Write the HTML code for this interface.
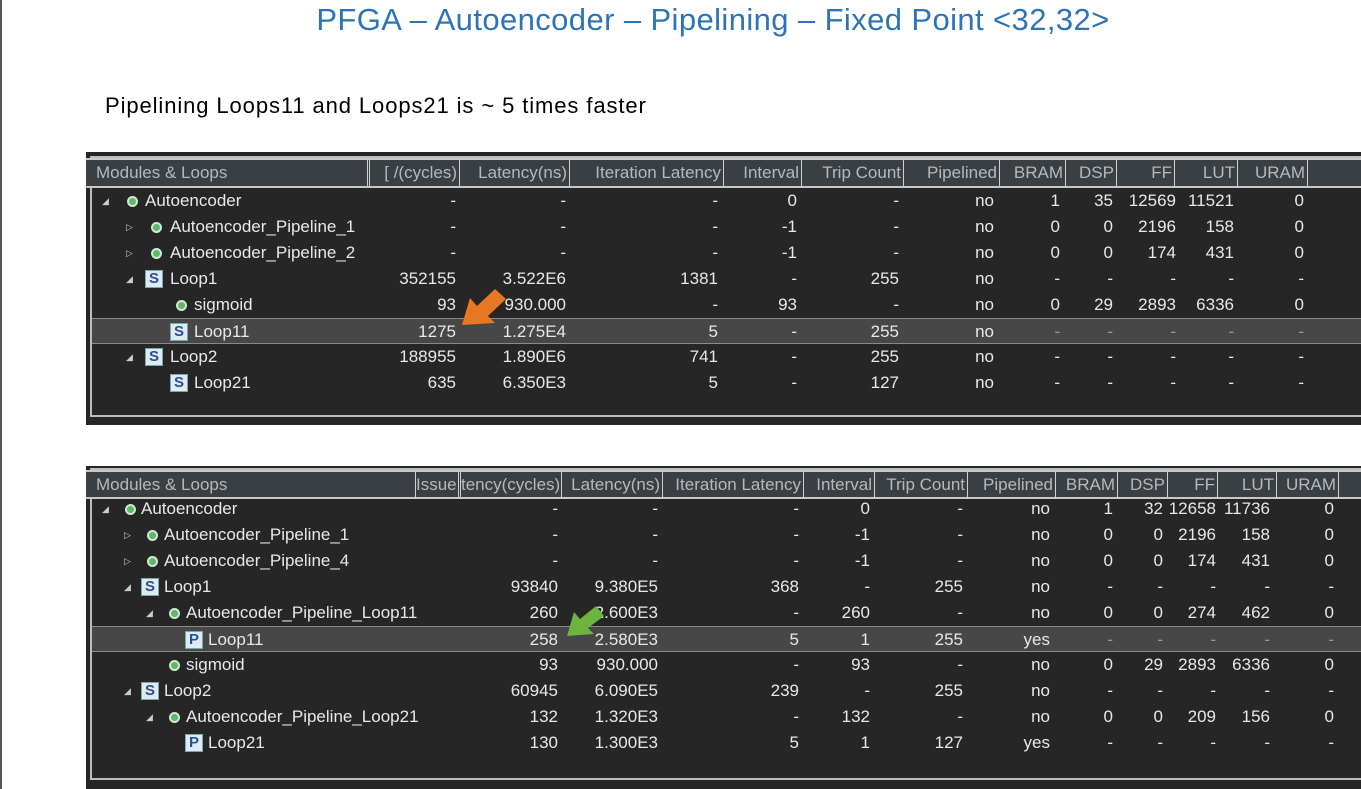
<!DOCTYPE html>
<html><head><meta charset="utf-8"><style>
*{margin:0;padding:0;box-sizing:border-box}
body{width:1361px;height:789px;background:#fff;position:relative;overflow:hidden;font-family:"Liberation Sans",sans-serif}
.lb{position:absolute;left:0;top:0;width:2px;height:789px;background:#555}
.title{position:absolute;left:0;width:1426px;top:2px;text-align:center;color:#2e74b5;font-size:31px;letter-spacing:0.4px}
.sub{position:absolute;left:105px;top:93px;font-size:22px;color:#000;letter-spacing:0.9px}
.tbl{position:absolute;background:#262626;overflow:hidden}
.frame{position:absolute;border:2px solid #bdbdbd;border-right:none}
.hdr{position:absolute;left:0;right:0;background:#3a3f44;border-bottom:2px solid #c8c8c8;border-top:2px solid #c8c8c8}
.h{position:absolute;top:0;height:100%;color:#b8b8b8;font-size:17px;line-height:25px;border-right:1px solid #d0d0d0;padding-right:2px;text-align:right;white-space:nowrap;overflow:hidden}
.r{position:absolute;left:4px;right:0;height:26px;color:#e8e8e8;font-size:17px;line-height:26px}
.hl{background:#474747;border-top:1px solid #8a8a8a;border-bottom:1px solid #8a8a8a}
.r i{position:absolute;font-style:normal;text-align:right;width:120px;top:0;white-space:nowrap}
.r b{position:absolute;font-weight:normal;white-space:nowrap;top:0}
.tri{position:absolute;top:0;color:#ccc;font-size:9px}
.dot{position:absolute;top:8px;width:11px;height:11px;border-radius:50%;background:#5fb86a;border:2px solid #cfe9d2}
.ic{position:absolute;top:4px;width:18px;height:18px;background:#dfeaf3;border:1px solid #7aa;color:#2a4f9e;font-size:15px;line-height:16px;text-align:center;font-weight:bold}
.t1 .a{left:246px}.t1 .b{left:356px}.t1 .c{left:508px}.t1 .d{left:587px}.t1 .e{left:689px}.t1 .f{left:784px}.t1 .g{left:850px}.t1 .h2{left:903px}.t1 .k{left:966px}.t1 .l{left:1024px}.t1 .m{left:1094px}
.t2 .a{left:348px}.t2 .b{left:448px}.t2 .c{left:589px}.t2 .d{left:660px}.t2 .e{left:753px}.t2 .f{left:840px}.t2 .g{left:903px}.t2 .h2{left:953px}.t2 .k{left:1006px}.t2 .l{left:1060px}.t2 .m{left:1124px}
</style></head><body>
<div class="lb"></div>
<div class="title">PFGA – Autoencoder – Pipelining – Fixed Point &lt;32,32&gt;</div>
<div class="sub">Pipelining Loops11 and Loops21 is ~ 5 times faster</div>

<div class="tbl" style="left:86px;top:152px;width:1275px;height:273px">
 <div class="frame" style="left:4px;top:4px;right:0;height:261px"></div>
 <div class="hdr" style="top:6px;height:30px">
  <div class="h" style="left:4px;width:280px;text-align:left;padding-left:6px;border-right:3px double #d0d0d0">Modules &amp; Loops</div>
  <div class="h" style="left:288px;width:86px">[ /(cycles)</div>
  <div class="h" style="left:374px;width:110px">Latency(ns)</div>
  <div class="h" style="left:484px;width:154px">Iteration Latency</div>
  <div class="h" style="left:638px;width:78px">Interval</div>
  <div class="h" style="left:716px;width:102px">Trip Count</div>
  <div class="h" style="left:818px;width:96px">Pipelined</div>
  <div class="h" style="left:914px;width:66px">BRAM</div>
  <div class="h" style="left:980px;width:51px">DSP</div>
  <div class="h" style="left:1031px;width:58px">FF</div>
  <div class="h" style="left:1089px;width:63px">LUT</div>
  <div class="h" style="left:1152px;width:70px">URAM</div>
 </div>
</div>
<div class="t1" style="position:absolute;left:86px;top:0;width:1275px;height:430px">
 <div class="r" style="top:188px"><span class="tri" style="left:12px">◢</span><span class="dot" style="left:37px"></span><b style="left:55px">Autoencoder</b><i class="a">-</i><i class="b">-</i><i class="c">-</i><i class="d">0</i><i class="e">-</i><i class="f">no</i><i class="g">1</i><i class="h2">35</i><i class="k">12569</i><i class="l">11521</i><i class="m">0</i></div>
 <div class="r" style="top:214px"><span class="tri" style="left:36px">▷</span><span class="dot" style="left:61px"></span><b style="left:80px">Autoencoder_Pipeline_1</b><i class="a">-</i><i class="b">-</i><i class="c">-</i><i class="d">-1</i><i class="e">-</i><i class="f">no</i><i class="g">0</i><i class="h2">0</i><i class="k">2196</i><i class="l">158</i><i class="m">0</i></div>
 <div class="r" style="top:240px"><span class="tri" style="left:36px">▷</span><span class="dot" style="left:61px"></span><b style="left:80px">Autoencoder_Pipeline_2</b><i class="a">-</i><i class="b">-</i><i class="c">-</i><i class="d">-1</i><i class="e">-</i><i class="f">no</i><i class="g">0</i><i class="h2">0</i><i class="k">174</i><i class="l">431</i><i class="m">0</i></div>
 <div class="r" style="top:266px"><span class="tri" style="left:36px">◢</span><span class="ic" style="left:55px">S</span><b style="left:80px">Loop1</b><i class="a">352155</i><i class="b">3.522E6</i><i class="c">1381</i><i class="d">-</i><i class="e">255</i><i class="f">no</i><i class="g">-</i><i class="h2">-</i><i class="k">-</i><i class="l">-</i><i class="m">-</i></div>
 <div class="r" style="top:292px"><span class="dot" style="left:86px"></span><b style="left:104px">sigmoid</b><i class="a">93</i><i class="b">930.000</i><i class="c">-</i><i class="d">93</i><i class="e">-</i><i class="f">no</i><i class="g">0</i><i class="h2">29</i><i class="k">2893</i><i class="l">6336</i><i class="m">0</i></div>
 <div class="r hl" style="top:318px;left:6px"><span class="ic" style="left:78px">S</span><b style="left:102px">Loop11</b><i class="a" style="margin-left:-2px">1275</i><i class="b" style="margin-left:-2px">1.275E4</i><i class="c" style="margin-left:-2px">5</i><i class="d" style="margin-left:-2px">-</i><i class="e" style="margin-left:-2px">255</i><i class="f" style="margin-left:-2px">no</i><i class="g" style="margin-left:-2px;color:#999">-</i><i class="h2" style="margin-left:-2px;color:#999">-</i><i class="k" style="margin-left:-2px;color:#999">-</i><i class="l" style="margin-left:-2px;color:#999">-</i><i class="m" style="margin-left:-2px;color:#999">-</i></div>
 <div class="r" style="top:344px"><span class="tri" style="left:36px">◢</span><span class="ic" style="left:55px">S</span><b style="left:80px">Loop2</b><i class="a">188955</i><i class="b">1.890E6</i><i class="c">741</i><i class="d">-</i><i class="e">255</i><i class="f">no</i><i class="g">-</i><i class="h2">-</i><i class="k">-</i><i class="l">-</i><i class="m">-</i></div>
 <div class="r" style="top:370px"><span class="ic" style="left:80px">S</span><b style="left:104px">Loop21</b><i class="a">635</i><i class="b">6.350E3</i><i class="c">5</i><i class="d">-</i><i class="e">127</i><i class="f">no</i><i class="g">-</i><i class="h2">-</i><i class="k">-</i><i class="l">-</i><i class="m">-</i></div>
</div>

<div class="tbl" style="left:86px;top:466px;width:1275px;height:323px">
 <div class="frame" style="left:4px;top:2px;right:0;height:312px"></div>
 <div class="hdr" style="top:4px;height:29px">
  <div class="h" style="left:4px;width:326px;text-align:left;padding-left:6px">Modules &amp; Loops</div>
  <div class="h" style="left:330px;width:45px;border-right:3px double #d0d0d0">Issue</div>
  <div class="h" style="left:375px;width:101px">tency(cycles)</div>
  <div class="h" style="left:476px;width:101px">Latency(ns)</div>
  <div class="h" style="left:577px;width:141px">Iteration Latency</div>
  <div class="h" style="left:718px;width:71px">Interval</div>
  <div class="h" style="left:789px;width:93px">Trip Count</div>
  <div class="h" style="left:882px;width:88px">Pipelined</div>
  <div class="h" style="left:970px;width:62px">BRAM</div>
  <div class="h" style="left:1032px;width:50px">DSP</div>
  <div class="h" style="left:1082px;width:50px">FF</div>
  <div class="h" style="left:1132px;width:59px">LUT</div>
  <div class="h" style="left:1191px;width:62px">URAM</div>
 </div>
</div>
<div class="t2" style="position:absolute;left:86px;top:0;width:1275px;height:789px">
 <div class="r" style="top:496px"><span class="tri" style="left:12px">◢</span><span class="dot" style="left:35px"></span><b style="left:51px">Autoencoder</b><i class="a">-</i><i class="b">-</i><i class="c">-</i><i class="d">0</i><i class="e">-</i><i class="f">no</i><i class="g">1</i><i class="h2">32</i><i class="k">12658</i><i class="l">11736</i><i class="m">0</i></div>
 <div class="r" style="top:522px"><span class="tri" style="left:34px">▷</span><span class="dot" style="left:57px"></span><b style="left:74px">Autoencoder_Pipeline_1</b><i class="a">-</i><i class="b">-</i><i class="c">-</i><i class="d">-1</i><i class="e">-</i><i class="f">no</i><i class="g">0</i><i class="h2">0</i><i class="k">2196</i><i class="l">158</i><i class="m">0</i></div>
 <div class="r" style="top:548px"><span class="tri" style="left:34px">▷</span><span class="dot" style="left:57px"></span><b style="left:74px">Autoencoder_Pipeline_4</b><i class="a">-</i><i class="b">-</i><i class="c">-</i><i class="d">-1</i><i class="e">-</i><i class="f">no</i><i class="g">0</i><i class="h2">0</i><i class="k">174</i><i class="l">431</i><i class="m">0</i></div>
 <div class="r" style="top:574px"><span class="tri" style="left:34px">◢</span><span class="ic" style="left:51px">S</span><b style="left:74px">Loop1</b><i class="a">93840</i><i class="b">9.380E5</i><i class="c">368</i><i class="d">-</i><i class="e">255</i><i class="f">no</i><i class="g">-</i><i class="h2">-</i><i class="k">-</i><i class="l">-</i><i class="m">-</i></div>
 <div class="r" style="top:600px"><span class="tri" style="left:56px">◢</span><span class="dot" style="left:79px"></span><b style="left:96px">Autoencoder_Pipeline_Loop11</b><i class="a">260</i><i class="b">2.600E3</i><i class="c">-</i><i class="d">260</i><i class="e">-</i><i class="f">no</i><i class="g">0</i><i class="h2">0</i><i class="k">274</i><i class="l">462</i><i class="m">0</i></div>
 <div class="r hl" style="top:626px;left:6px"><span class="ic" style="left:93px">P</span><b style="left:116px">Loop11</b><i class="a" style="margin-left:-2px">258</i><i class="b" style="margin-left:-2px">2.580E3</i><i class="c" style="margin-left:-2px">5</i><i class="d" style="margin-left:-2px">1</i><i class="e" style="margin-left:-2px">255</i><i class="f" style="margin-left:-2px">yes</i><i class="g" style="margin-left:-2px;color:#999">-</i><i class="h2" style="margin-left:-2px;color:#999">-</i><i class="k" style="margin-left:-2px;color:#999">-</i><i class="l" style="margin-left:-2px;color:#999">-</i><i class="m" style="margin-left:-2px;color:#999">-</i></div>
 <div class="r" style="top:652px"><span class="dot" style="left:79px"></span><b style="left:96px">sigmoid</b><i class="a">93</i><i class="b">930.000</i><i class="c">-</i><i class="d">93</i><i class="e">-</i><i class="f">no</i><i class="g">0</i><i class="h2">29</i><i class="k">2893</i><i class="l">6336</i><i class="m">0</i></div>
 <div class="r" style="top:678px"><span class="tri" style="left:34px">◢</span><span class="ic" style="left:51px">S</span><b style="left:74px">Loop2</b><i class="a">60945</i><i class="b">6.090E5</i><i class="c">239</i><i class="d">-</i><i class="e">255</i><i class="f">no</i><i class="g">-</i><i class="h2">-</i><i class="k">-</i><i class="l">-</i><i class="m">-</i></div>
 <div class="r" style="top:704px"><span class="tri" style="left:56px">◢</span><span class="dot" style="left:79px"></span><b style="left:96px">Autoencoder_Pipeline_Loop21</b><i class="a">132</i><i class="b">1.320E3</i><i class="c">-</i><i class="d">132</i><i class="e">-</i><i class="f">no</i><i class="g">0</i><i class="h2">0</i><i class="k">209</i><i class="l">156</i><i class="m">0</i></div>
 <div class="r" style="top:730px"><span class="ic" style="left:95px">P</span><b style="left:118px">Loop21</b><i class="a">130</i><i class="b">1.300E3</i><i class="c">5</i><i class="d">1</i><i class="e">127</i><i class="f">yes</i><i class="g">-</i><i class="h2">-</i><i class="k">-</i><i class="l">-</i><i class="m">-</i></div>
</div>

<svg style="position:absolute;left:0;top:0" width="1361" height="789">
 <polygon points="462,325 470,298 477,306 495,289 506,299 488,316 495,323" fill="#e87722"/>
 <polygon points="567,636 574,612 580,619 596,606 604,616 588,628 594,634" fill="#6db33f"/>
</svg>
</body></html>
